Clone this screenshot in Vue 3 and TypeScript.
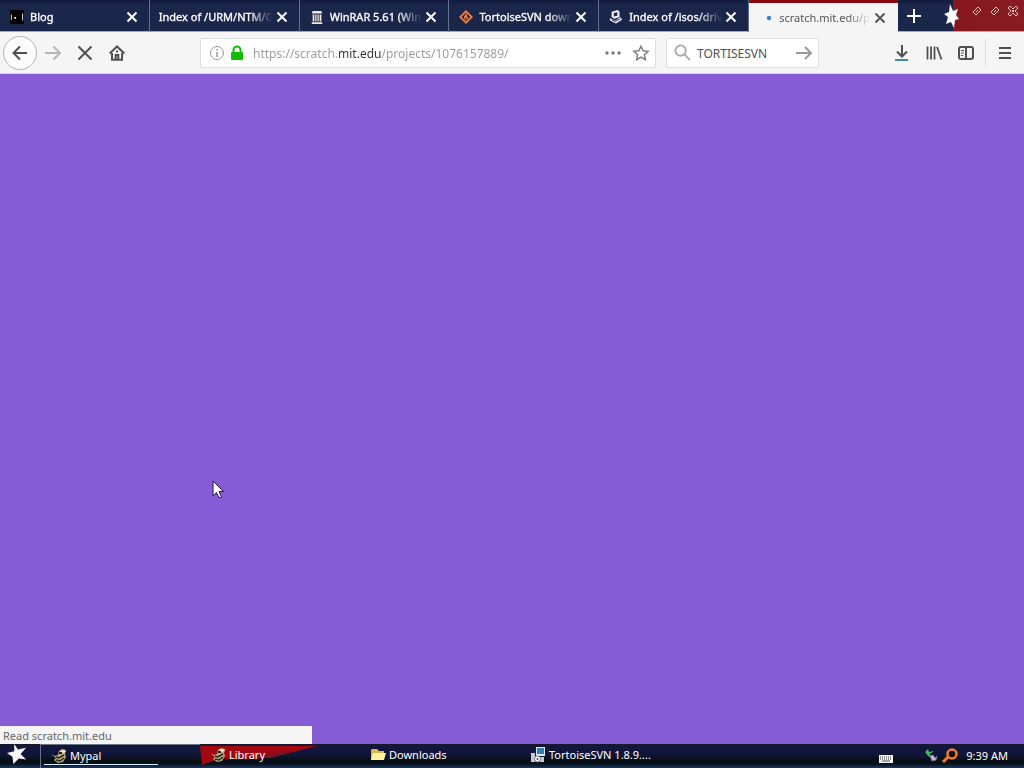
<script setup lang="ts">
import { ref } from 'vue'

interface Tab { title: string; icon: string; active?: boolean }
interface Task { title: string; icon: string; kind: string }

const tabs: Tab[] = [
  { title: 'Blog', icon: 'blog' },
  { title: 'Index of /URM/NTM/Ga', icon: '' },
  { title: 'WinRAR 5.61 (Win', icon: 'archive' },
  { title: 'TortoiseSVN downl', icon: 'git' },
  { title: 'Index of /isos/driv', icon: 'disc' },
  { title: 'scratch.mit.edu/pr', icon: 'loading', active: true },
]
const tasks: Task[] = [
  { title: 'Mypal', icon: 'mypal', kind: 'current' },
  { title: 'Library', icon: 'mypal', kind: 'alert' },
  { title: 'Downloads', icon: 'folder', kind: '' },
  { title: 'TortoiseSVN 1.8.9....', icon: 'installer', kind: '' },
]
const url = ref('https://scratch.mit.edu/projects/1076157889/')
const query = ref('TORTISESVN')
</script>

<template>
  <div class="desktop">
    <header class="titlebar">
      <nav class="tabs" aria-label="Tabs">
        <div v-for="tab in tabs" :key="tab.title" class="tab" :class="{ active: tab.active }">
          <svg v-if="tab.icon === 'blog'" class="favicon" viewBox="0 0 16 16"><path d="M0 0h16v16H0z" fill="#000" /><path d="M1 5h1v6H1zM14 4h1v8h-1zM5 8h2v2H5z" fill="#fff" /></svg>
          <svg v-else-if="tab.icon === 'archive'" class="favicon" viewBox="0 0 16 16"><path d="M3 1h10l1 3H2zM3 5h2v8H3zM6 5h1.500v8H6zM8.500 5H10v8H8.500zM11 5h2v8h-2zM2 14h12v2H2z" fill="#eeeae0" /></svg>
          <svg v-else-if="tab.icon === 'git'" class="favicon" viewBox="0 0 16 16"><path d="M8 0l8 8-8 8-8-8z" fill="#e98145" /><path d="M8 3l5 5-5 5-5-5z" fill="#2a1a20" /><path d="M9 4C6 6 5 8 6 10l2 2 3-3-2-2z" fill="#f08a4c" /><path d="M8 8l1 2-1 1-1-1z" fill="#2a1a20" /></svg>
          <svg v-else-if="tab.icon === 'disc'" class="favicon" viewBox="0 0 16 16"><path d="M3 2l7-2 2 2v6l-6 2-3-2z" fill="#f2f4ff" /><path d="M5.500 3.500l4-1v4l-4 1z" fill="#1c2450" /><path d="M1 9l6 3 6-4 2 3-7 4.500L1 12z" fill="#e6e9f7" /><path d="M3 11l4 2 6-3" stroke="#1c2450" fill="none" /></svg>
          <svg v-else-if="tab.icon === 'loading'" class="favicon" viewBox="0 0 16 16"><circle cx="8" cy="8" r="2.500" fill="#2f87cf" /></svg>
          <button class="tab-title" type="button">{{ tab.title }}</button>
          <button class="tab-close" type="button" :aria-label="`Close ${tab.title}`">
            <svg viewBox="0 0 12 12"><path d="M1.500 1.500l9 9M10.500 1.500l-9 9" /></svg>
          </button>
        </div>
      </nav>
      <button class="new-tab" type="button" aria-label="New tab"><svg viewBox="0 0 14 14"><path d="M7 0v14M0 7h14" stroke="#fff" stroke-width="2" /></svg></button>
      <div class="window-controls">
        <svg class="cap-star" viewBox="0 0 16 26"><path d="M6 1l3 7 5-2-2 6 3 4-4 1-1 8-3-6-5 2 2-7-4-3 5-2z" fill="#fff" /></svg>
        <button type="button" aria-label="Minimize"><svg viewBox="0 0 10 10"><path d="M1 6l5-5 3 3-5 5zM4 6l2-2" /></svg></button>
        <button type="button" aria-label="Maximize"><svg viewBox="0 0 10 10"><path d="M1 6l5-5 3 3-5 5zM4 6l2-2" /></svg></button>
        <button type="button" aria-label="Close"><svg viewBox="0 0 10 10"><path d="M2 0l3 3 3-3 2 2-3 3 3 3-2 2-3-3-3 3-2-2 3-3-3-3zM4 4l2 2M6 4L4 6" /></svg></button>
      </div>
    </header>

    <div class="toolbar">
      <button class="back" type="button" aria-label="Back"><svg viewBox="0 0 16 16"><path d="M15 8H1.500M8 1.500L1.500 8 8 14.500" /></svg></button>
      <button class="tool faint" type="button" aria-label="Forward"><svg viewBox="0 0 16 16"><path d="M0 8h14.500M8.500 1.500L15 8l-6.500 6.500" /></svg></button>
      <button class="tool" type="button" aria-label="Stop"><svg viewBox="0 0 16 16"><path d="M1.500 1.500l13 13M14.500 1.500l-13 13" /></svg></button>
      <button class="tool" type="button" aria-label="Home"><svg viewBox="0 0 16 16"><path d="M.7 8.500L8 1.500l7.300 7M3 8v6.800h10V8" /><path d="M6.700 14V10h2.600v4" /><path d="M7 6.500h2" /></svg></button>
      <div class="field address">
        <svg class="info" viewBox="0 0 16 16"><circle cx="8" cy="8" r="6.500" /><path d="M8 7v5M8 4v1.500" stroke-width="1.500" /></svg>
        <svg class="lock" viewBox="0 0 14 16"><path d="M3.500 8V5a3.500 3.500 0 017 0v3" fill="none" stroke="#12bc00" stroke-width="2" /><rect x="1" y="7" width="12" height="8" rx="1" fill="#12bc00" /></svg>
        <input v-model="url" class="url" type="text" aria-label="Address" />
        <button type="button" aria-label="Page actions"><svg viewBox="0 0 16 16"><g fill="#777" stroke="none"><circle cx="2" cy="8" r="1.700" /><circle cx="8" cy="8" r="1.700" /><circle cx="14" cy="8" r="1.700" /></g></svg></button>
        <button type="button" aria-label="Bookmark"><svg viewBox="0 0 16 16"><path d="M8 1.200l2.100 4.600 5 .5-3.700 3.400 1 5L8 12.200l-4.400 2.500 1-5L.9 6.300l5-.5z" /></svg></button>
      </div>
      <div class="field search">
        <svg class="lens" viewBox="0 0 18 18"><circle cx="7" cy="7" r="5.500" /><path d="M11 11l6 6" /></svg>
        <input v-model="query" type="text" aria-label="Search" />
        <button type="button" aria-label="Go"><svg viewBox="0 0 16 16"><path d="M0 8h15M9 2l6 6-6 6" /></svg></button>
      </div>
      <div class="tools-end">
        <button class="tool" type="button" aria-label="Downloads"><svg viewBox="0 0 16 16"><path d="M8 0v11M3 6.500L8 11.500l5-5" /><path d="M1 15h13" stroke="#4689a5" /></svg></button>
        <button class="tool" type="button" aria-label="Library"><svg viewBox="0 0 16 16"><path d="M1.500 1.500v13M5 1.500v13M8.500 1.500v13M11 2l4.500 12.500" stroke-width="1.800" /></svg></button>
        <button class="tool" type="button" aria-label="Sidebars"><svg viewBox="0 0 16 16"><rect x="1" y="2" width="14" height="12" rx="2" /><path d="M8 2v12" /><path d="M3 5.500h3M3 8h3M3 10.500h2" stroke-width="1" /></svg></button>
        <span class="rule"></span>
        <button class="tool" type="button" aria-label="Menu"><svg viewBox="0 0 16 16"><path d="M2 3h12M2 8h12M2 13h12" /></svg></button>
      </div>
    </div>

    <main class="page">
      <svg class="cursor" viewBox="0 0 12 20"><path d="M1 1v15l3.500-3.500L7 18l2.500-1L7 11.500h4.500z" fill="#fff" stroke="#2b1748" /></svg>
      <div class="status" role="status">Read scratch.mit.edu</div>
    </main>

    <footer class="taskbar">
      <button class="start" type="button" aria-label="Start"><svg viewBox="0 0 22 22"><path d="M8 0l4 6 9-2-6 7 6 6-8-1-6 6-1-8-6-4 8-2z" fill="#f4f6fc" /></svg></button>
      <div class="tasks">
        <button v-for="task in tasks" :key="task.title" type="button" class="task" :class="task.kind">
          <svg v-if="task.kind === 'alert'" class="flare" viewBox="0 0 120 22" preserveAspectRatio="none"><path d="M0 1h119L72 14 44 16 20 15 2 22z" fill="#a30812" /><path d="M24 11l32 1 42-7-24 9-28 1z" fill="#7b1422" /></svg>
          <svg v-if="task.icon === 'mypal'" class="task-icon" viewBox="0 0 16 16"><path d="M0 6l4 2 3-1 1-4 3-2 4 1-1 4 1 3-3 5-5 1-4-3 2-2z" fill="#b8a978" /><path d="M5 9l3 1 5-3M5 12l4 1 4-3" stroke="#2a2925" stroke-width="1.500" fill="none" /><path d="M9 3l4-1 2 2-4 1z" fill="#f2edcf" /><path d="M8 4h3v2H8z" fill="#28231c" /></svg>
          <svg v-else-if="task.icon === 'folder'" class="task-icon" viewBox="0 0 16 16"><path d="M1 3l1-1h5l2 2h5v9H1z" fill="#d9b94c" /><path d="M1 13L3 6h13l-2 7z" fill="#fff0a0" /></svg>
          <svg v-else class="task-icon" viewBox="0 0 16 16"><path d="M6 0h9v9H6z" fill="#dceaf5" /><path d="M7 1h7v6H7z" fill="#367cb5" /><path d="M1 6h4v9H1zM10 10h4v5h-4z" fill="#c5ccd2" /><circle cx="7.500" cy="12" r="3" fill="#fff" stroke="#6d8292" /><circle cx="7.500" cy="12" r="1" fill="#345" /></svg>
          <span>{{ task.title }}</span>
        </button>
      </div>
      <div class="tray">
        <svg class="keyboard" viewBox="0 0 14 8"><path d="M0 0h14v8H0z" fill="#f4f4f4" /><path d="M1 2h12M1 4h12" stroke="#333" stroke-dasharray="1 1" /><path d="M3 6h8" stroke="#555" /></svg>
        <svg class="usb" viewBox="0 0 14 14"><path d="M1 3l3-3 1 3 5-1-4 3 1 4-3-2z" fill="#43b653" /><path d="M6 7l2 5 4-1 1-4-2 2-2-3z" fill="#c1bfd2" stroke="#77738d" /></svg>
        <svg class="magnifier" viewBox="0 0 16 16"><circle cx="10" cy="6" r="4.500" fill="#101018" stroke="#f47c22" stroke-width="2.500" /><path d="M6 9l-5 5" stroke="#f47c22" stroke-width="3" /></svg>
        <time>9:39 AM</time>
      </div>
    </footer>
  </div>
</template>

<style>
body { margin: 0; }
</style>

<style scoped>
.desktop { min-height: 100vh; display: flex; flex-direction: column; font: 11px/16px "Noto Sans", "Open Sans", sans-serif; color: #fff; }
button, input { font: inherit; color: inherit; border: 0; padding: 0; margin: 0; background: none; min-width: 0; }
svg { display: block; flex-shrink: 0; overflow: visible; }
.titlebar { display: flex; height: 32px; background: linear-gradient(#121b3d, #1b264b 5px, #1b264b 31px, #a9abb8 31px); }
.tabs { display: flex; flex: 1; min-width: 0; }
.tab { flex: 1; min-width: 0; display: flex; align-items: center; padding: 2px 11px 0 9px; border-right: 1px solid #65708e; box-sizing: border-box; }
.favicon { width: 14px; height: 14px; margin: 0 6px 0 1px; }
.tab-title { flex: 1; text-align: left; white-space: nowrap; overflow: hidden; -webkit-text-stroke: 0.3px; mask-image: linear-gradient(to right, #000 calc(100% - 24px), transparent); }
.tab-close { width: 12px; margin-left: 3px; }
.tab-close svg { width: 12px; height: 12px; fill: none; stroke: currentColor; stroke-width: 2; }
.tab.active { background: #f5f5f5; border-top: 3px solid #8c0610; border-right: 0; padding: 0 12px 0 8px; color: #555; }
.active .tab-title { -webkit-text-stroke: 0; }
.active .favicon { margin-left: 5px; margin-right: 3px; }
.new-tab { width: 32px; padding-left: 9px; }
.new-tab svg { width: 14px; height: 14px; }
.window-controls { display: flex; align-items: flex-start; gap: 8px; width: 74px; box-sizing: border-box; padding: 6px 6px 0 0; justify-content: flex-end; margin-left: 20px; background: linear-gradient(to right, transparent 3px, #87171f 3px, #871c22); height: 31px; position: relative; }
.window-controls button svg { width: 10px; height: 10px; fill: none; stroke: #e7c6b9; }
.cap-star { position: absolute; left: -6px; top: 3px; width: 16px; height: 26px; }
.toolbar { display: flex; align-items: center; height: 42px; box-sizing: border-box; background: #f5f5f5; border-bottom: 1px solid #d9d6e2; padding: 0 3px; color: #505050; }
.toolbar button svg { width: 16px; height: 16px; fill: none; stroke: currentColor; stroke-width: 2; }
.back { width: 34px; height: 34px; border: 1px solid #b5b5b5; border-radius: 50%; background: #fcfcfc; display: grid; place-items: center; box-sizing: border-box; }
.tool { width: 32px; height: 32px; display: grid; place-items: center; }
.faint { color: #b7b7b7; }
.field { display: flex; align-items: center; height: 30px; border: 1px solid #dedede; background: #fff; box-sizing: border-box; border-radius: 2px; font-size: 12px; }
.field input { padding-top: 2px; }
.address { flex: 1 1 456px; margin-left: 67px; padding: 0 6px 0 8px; min-width: 0; }
.info { width: 16px; height: 16px; fill: none; stroke: #999; }
.lock { width: 14px; height: 16px; margin: 0 9px 0 5px; }
.url { flex: 1; color: transparent; caret-color: #333; background: linear-gradient(to right, #999 86px, #333 86px, #333 128px, #999 128px); background-clip: text; }
.address button { margin-left: 12px; color: #808080; }
.address button svg { stroke-width: 1.5; }
.search { flex: 0 1 153px; margin-left: 10px; padding: 0 6px 0 7px; min-width: 0; }
.search input { flex: 1; margin-left: 6px; }
.search button { color: #999; }
.lens { width: 17px; height: 17px; fill: none; stroke: #aaa; stroke-width: 2; }
.tools-end { display: flex; align-items: center; margin-left: 67px; }
.rule { width: 1px; height: 28px; background: #dedede; margin: 0 3px; }
.page { position: relative; flex: 1; background: #855cd6; }
.cursor { position: absolute; left: 212px; top: 406px; width: 12px; height: 20px; }
.status { position: absolute; left: 0; bottom: 0; width: 312px; height: 18px; line-height: 20px; box-sizing: border-box; padding-left: 3px; background: #f5f5f5; color: #666; }
.taskbar { height: 24px; display: flex; align-items: stretch; background: linear-gradient(#15192b, #111642 6px, #101536 11px, #071014 16px, #081019 20px, #183154 23px); }
.start { width: 40px; display: grid; place-items: center; padding: 0 6px 4px 0; }
.start svg { width: 20px; height: 20px; }
.tasks { flex: 1; display: flex; max-width: 640px; }
.task { flex: 1 1 160px; box-sizing: border-box; position: relative; display: flex; align-items: center; gap: 3px; padding: 0 0 2px 10px; white-space: nowrap; }
.task span, .task-icon { position: relative; }
.task-icon { width: 16px; height: 16px; }
.current { border-top: 1px solid #64728f; border-left: 1px solid #64728f; }
.current::after { content: ""; position: absolute; left: 3px; right: 42px; bottom: 3px; height: 1px; background: #d9edfc; }
.flare { position: absolute; left: 0; top: 1px; width: 118px; height: 20px; }
.tray { display: flex; align-items: center; margin-left: auto; padding-right: 16px; }
.keyboard { width: 14px; height: 8px; margin-right: 31px; margin-top: 5px; }
.usb { width: 14px; height: 14px; margin-right: 4px; }
.magnifier { width: 16px; height: 16px; margin-right: 8px; }
</style>
